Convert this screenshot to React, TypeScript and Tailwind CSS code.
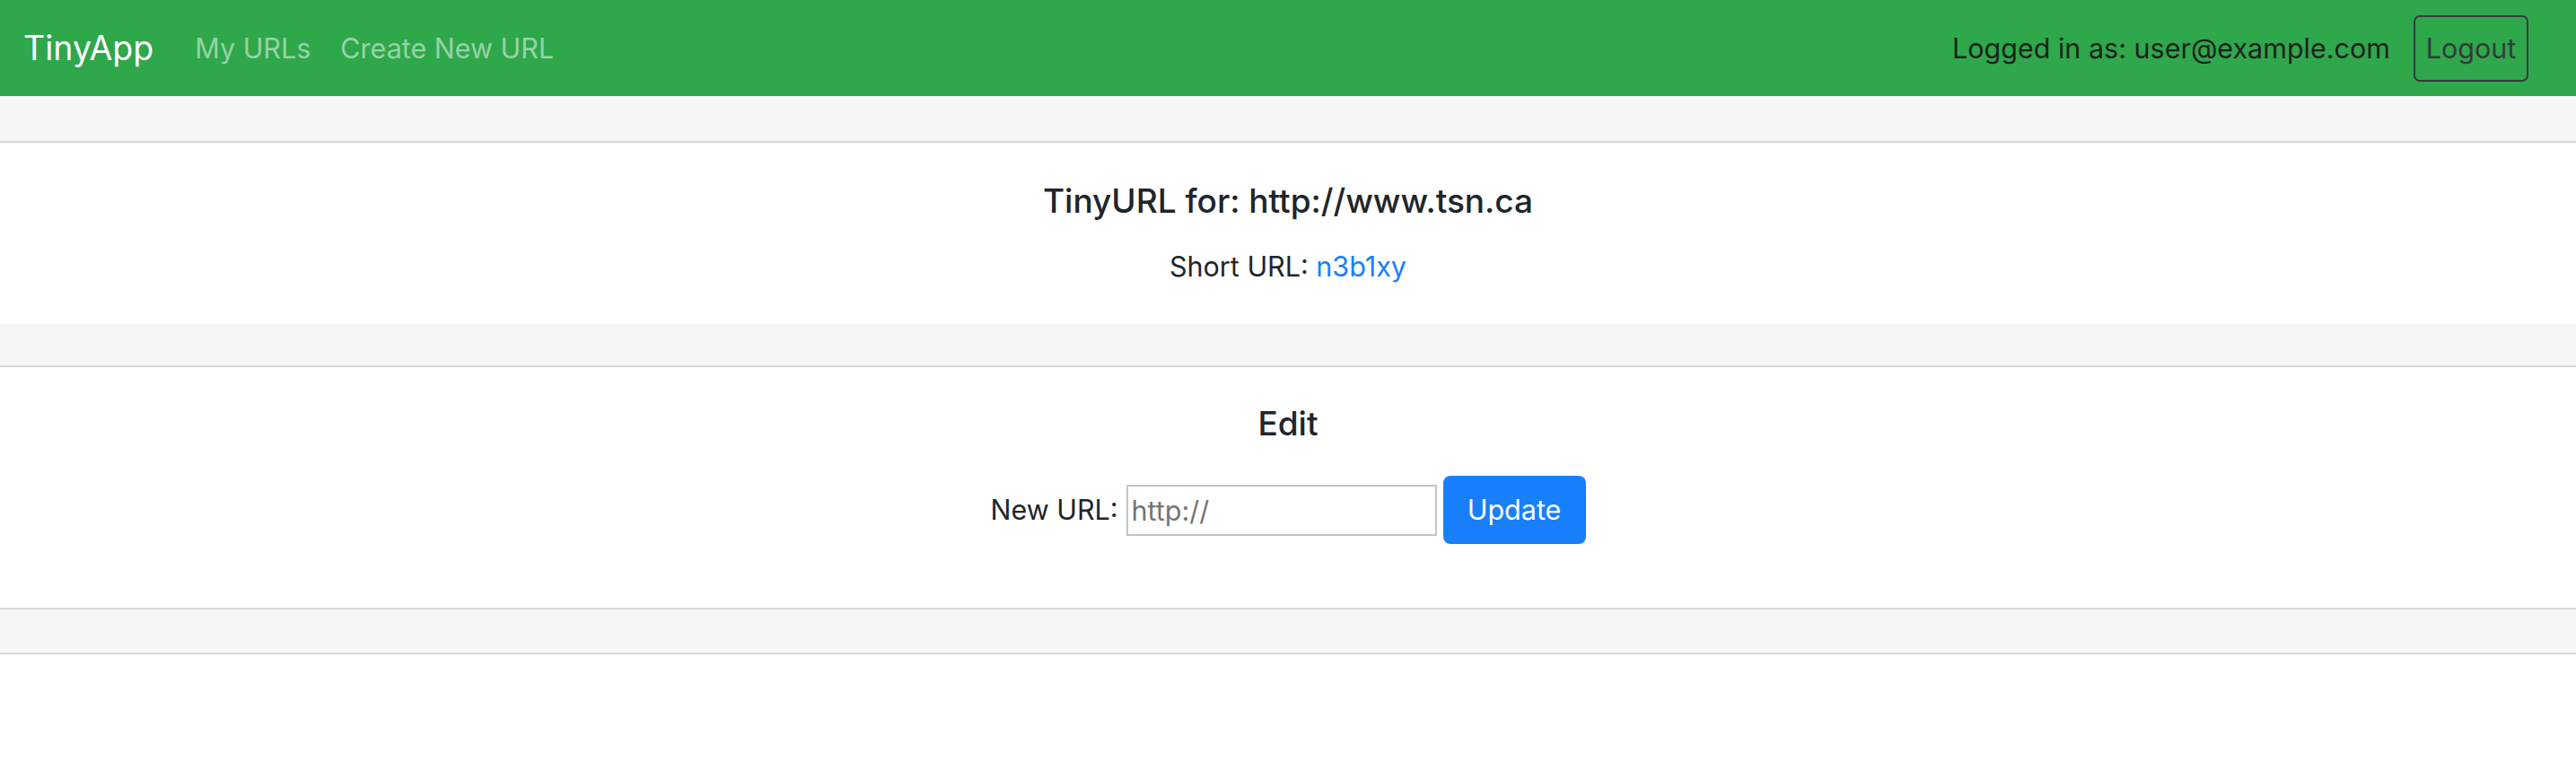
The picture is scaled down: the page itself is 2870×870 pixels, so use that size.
import React from 'react';

const App: React.FC = () => {
  return (
    <div className="min-h-[870px] bg-white font-['Inter',sans-serif] text-[#212529]">
      {/* Navbar */}
      <nav className="flex h-[107px] items-center justify-between bg-[#2fa74b] pl-[26px] pr-[53px]">
        <div className="flex items-center">
          <a href="#" className="mr-[46px] text-[37.5px] leading-[54px] text-white">
            TinyApp
          </a>
          <a href="#" className="text-[30.5px] leading-[44px] text-white/50">
            My URLs
          </a>
          <a href="#" className="ml-[33px] text-[30.5px] leading-[44px] text-white/50">
            Create New URL
          </a>
        </div>
        <div className="flex items-center gap-[26px]">
          <span className="text-[30.5px] leading-[44px] text-[#1d231e]">Logged in as: user@example.com</span>
          <button className="h-[74px] w-[128px] rounded-[7px] border-2 border-[#343a40] text-[30.5px] text-[#343a40]">
            Logout
          </button>
        </div>
      </nav>

      {/* Short URL card */}
      <div className="h-[52px] border-b-2 border-[#d9d9d9] bg-[#f7f7f7]" />
      <div className="flex h-[202px] flex-col items-center pt-[43px]">
        <h5 className="text-[37px] font-medium leading-[44px]">TinyURL for: http://www.tsn.ca</h5>
        <p className="mt-[29px] text-[30.5px] leading-[44px]">
          Short URL: <a href="#" className="text-[#187ffb]">n3b1xy</a>
        </p>
      </div>

      {/* Edit card */}
      <div className="h-[48px] border-b-2 border-[#d9d9d9] bg-[#f7f7f7]" />
      <div className="flex h-[268px] flex-col items-center pt-[41px]">
        <h5 className="text-[37px] font-medium leading-[44px]">Edit</h5>
        <form className="mt-[36px] flex items-center" onSubmit={(e) => e.preventDefault()}>
          <label className="text-[30.5px] leading-[44px]">New URL:</label>
          <input
            type="text"
            placeholder="http://"
            className="ml-[9px] h-[57px] w-[346px] border-2 border-[#c4c4c4] px-[4px] text-[30.5px] placeholder:text-[#757575]"
          />
          <button className="ml-[7px] h-[76px] w-[159px] rounded-[8px] bg-[#187ffb] text-[30.5px] text-white">
            Update
          </button>
        </form>
      </div>
      <div className="h-[52px] border-y-2 border-[#d9d9d9] bg-[#f7f7f7]" />
    </div>
  );
};

export default App;
